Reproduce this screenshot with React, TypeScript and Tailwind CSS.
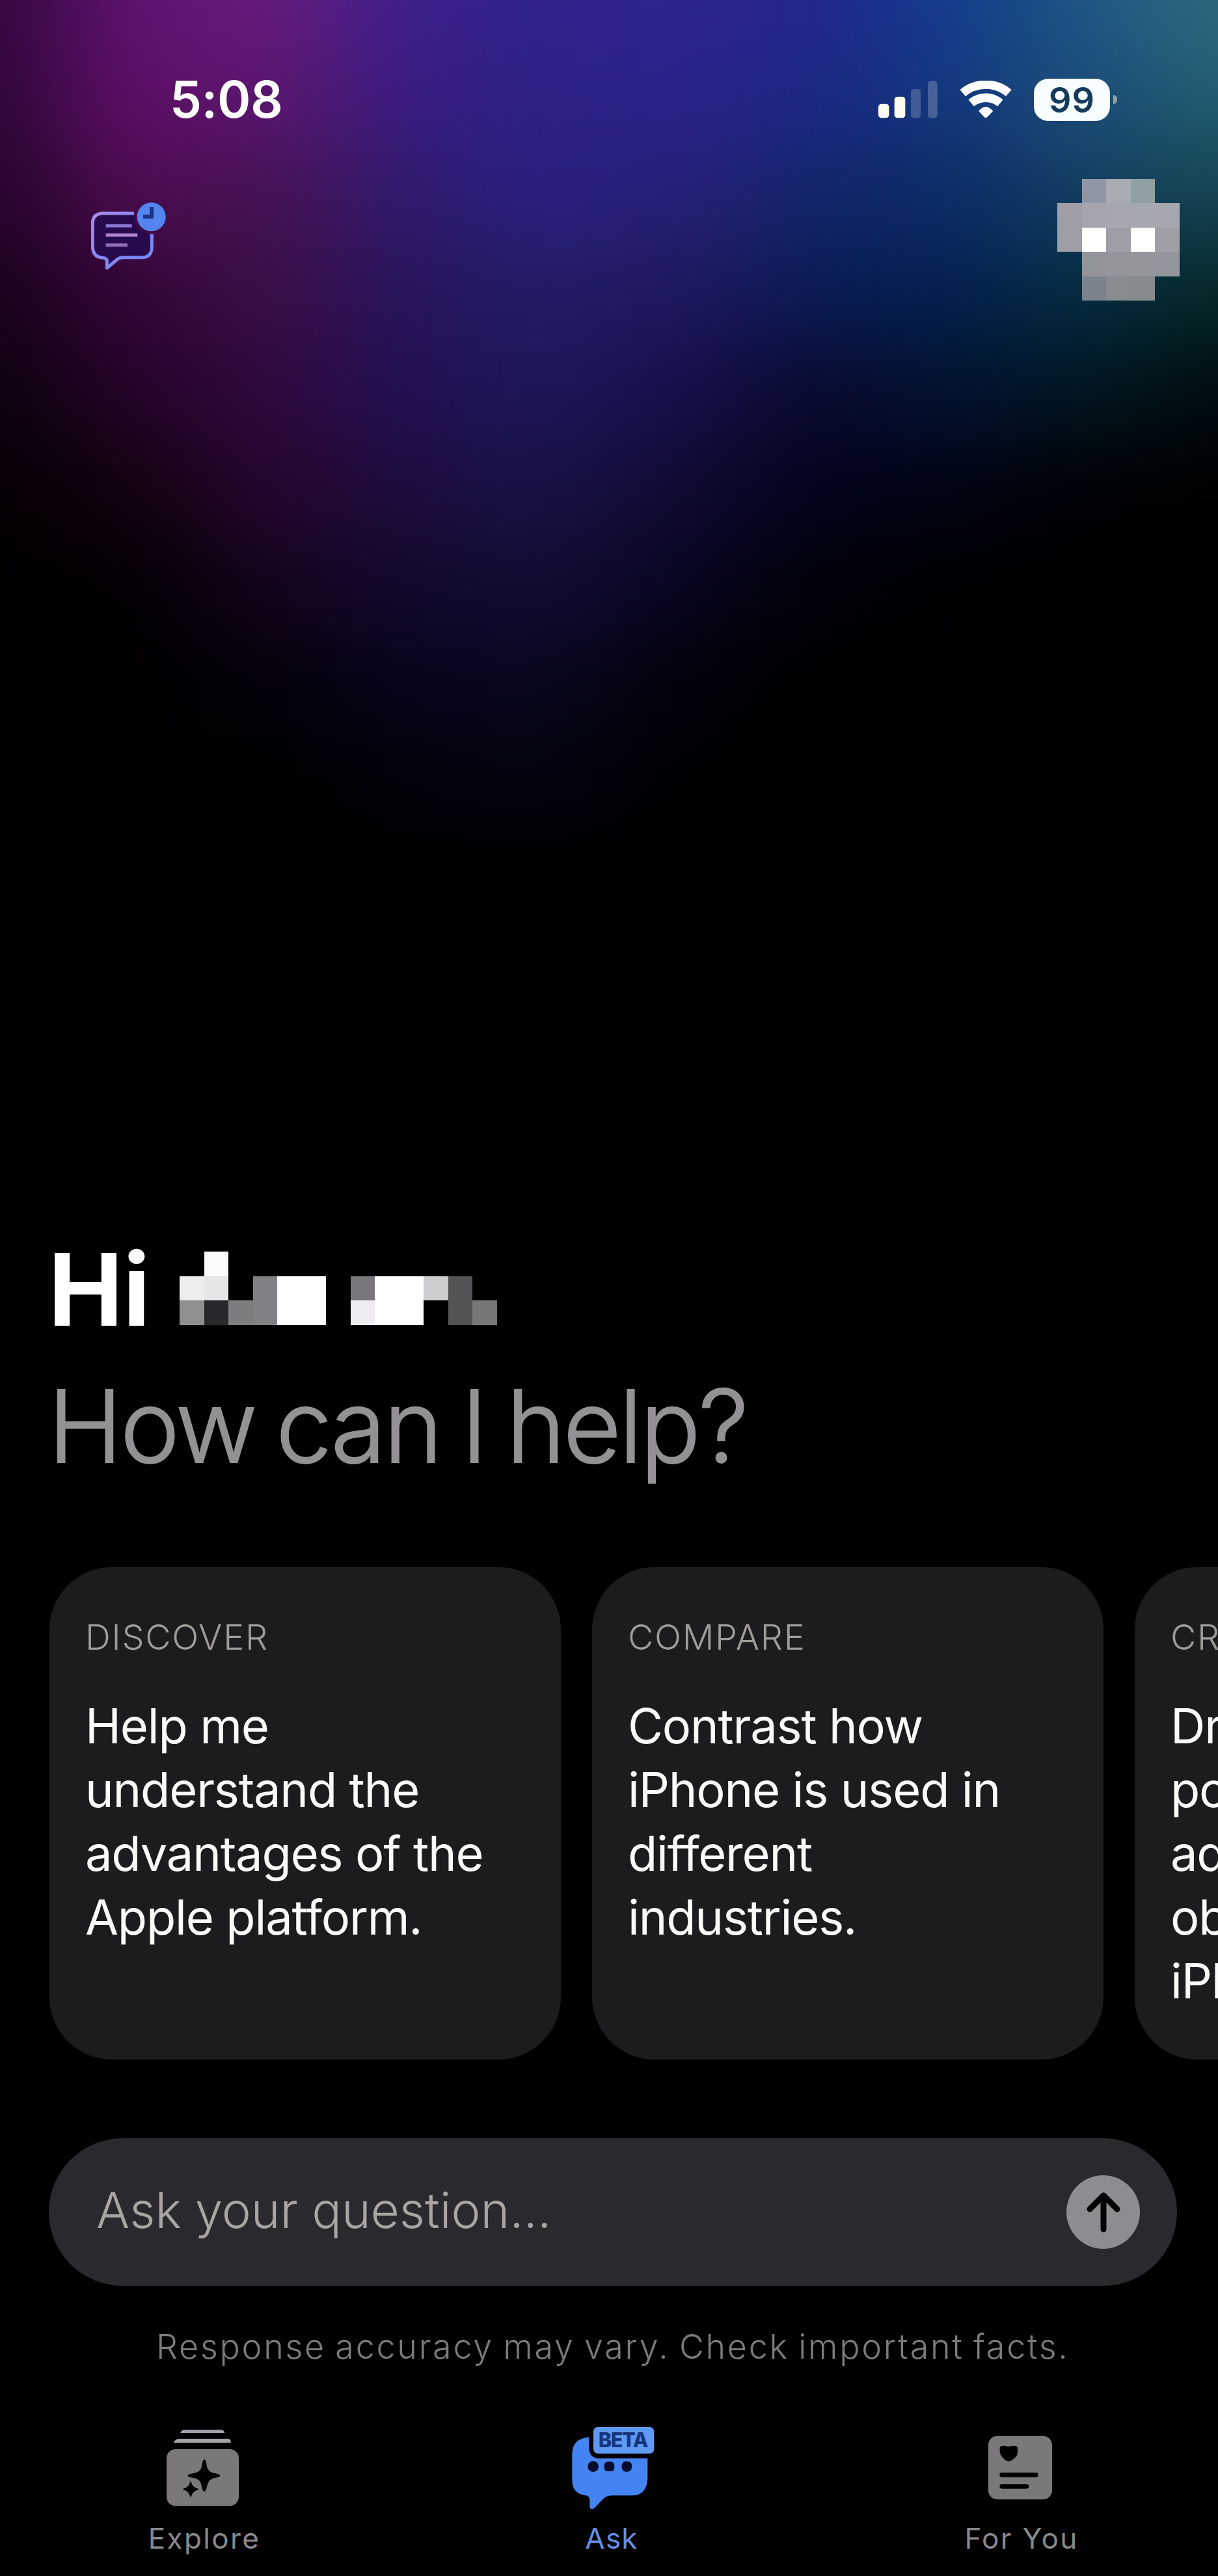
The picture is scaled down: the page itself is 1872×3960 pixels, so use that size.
import type { ReactNode } from "react";

const prompts = [
  {
    label: "DISCOVER",
    text: "Help me\nunderstand the\nadvantages of the\nApple platform.",
  },
  {
    label: "COMPARE",
    text: "Contrast how\niPhone is used in\ndifferent\nindustries.",
  },
  {
    label: "CREATE",
    text: "Draft a list of\npotential\nadoption\nobjections to\niPhone.",
  },
];

// Colour mesh behind the header, one row every 150px, one column every 208px
const mesh = [
  ["#36063f", "#5f1470", "#661a7c", "#3e208a", "#2f238a", "#2e2590", "#24268c", "#123c8c", "#205684", "#2c6a7e"],
  ["#30063a", "#5e0f66", "#5a176e", "#3a1c80", "#2b2284", "#2a2388", "#1c2882", "#12387e", "#1c4c78", "#235c70"],
  ["#26042c", "#4c0c50", "#461252", "#301a6e", "#28207e", "#262076", "#12246a", "#0a2c66", "#123e60", "#144450"],
  ["#18031a", "#340538", "#3a0f48", "#28145a", "#201c66", "#1e185e", "#0b1b52", "#03204e", "#042c42", "#052826"],
  ["#0e0210", "#240428", "#2e0a40", "#241052", "#1c1858", "#16104a", "#070a30", "#021230", "#011620", "#000c10"],
  ["#050004", "#140210", "#26062e", "#1e0c40", "#181346", "#0f0a34", "#03041c", "#010414", "#000206", "#000000"],
  ["#000000", "#030004", "#14041c", "#12082c", "#110c34", "#070620", "#01020a", "#000002", "#000000", "#000000"],
  ["#000000", "#000000", "#05010a", "#08041c", "#08081e", "#02020c", "#000000", "#000000", "#000000", "#000000"],
  ["#000000", "#000000", "#000000", "#02030a", "#030410", "#000002", "#000000", "#000000", "#000000", "#000000"],
  ["#000000", "#000000", "#000000", "#000000", "#000000", "#000000", "#000000", "#000000", "#000000", "#000000"],
];

const avatar = [
  "bg-transparent", "bg-[#8f97a5]", "bg-[#a7abb2]", "bg-[#909fa4]", "bg-transparent",
  "bg-[#9f9da8]", "bg-[#a5a4ac]", "bg-[#a6a7ae]", "bg-[#a6a8af]", "bg-[#a7a8af]",
  "bg-[#9f9da6]", "bg-white", "bg-[#9e9fa6]", "bg-white", "bg-[#a09fa6]",
  "bg-transparent", "bg-[#929499]", "bg-[#94959a]", "bg-[#95969b]", "bg-[#94959d]",
  "bg-transparent", "bg-[#7a828b]", "bg-[#878c91]", "bg-[#868b90]", "bg-transparent",
];

const nameMask = [
  "bg-black", "bg-[#fbfbfb]", "bg-black", "bg-black", "bg-black", "bg-black", "bg-black", "bg-black", "bg-black", "bg-black", "bg-black", "bg-black", "bg-black",
  "bg-[#ededf0]", "bg-[#e6e6e9]", "bg-black", "bg-[#828084]", "bg-white", "bg-white", "bg-black", "bg-[#79777b]", "bg-white", "bg-white", "bg-[#cdccce]", "bg-[#535255]", "bg-black",
  "bg-[#8f8e91]", "bg-[#28272c]", "bg-[#7d7c7f]", "bg-[#828084]", "bg-white", "bg-white", "bg-black", "bg-[#eeecf0]", "bg-white", "bg-white", "bg-black", "bg-[#535255]", "bg-[#777679]",
];

function Aurora() {
  return (
    <svg className="absolute left-0 top-0 h-[1560px] w-full" viewBox="0 0 1872 1560" aria-hidden="true">
      <defs>
        <filter
          id="soften"
          filterUnits="userSpaceOnUse"
          x="-400"
          y="-400"
          width="2672"
          height="2300"
          colorInterpolationFilters="sRGB"
        >
          <feGaussianBlur stdDeviation="84 56" />
        </filter>
      </defs>
      <g filter="url(#soften)">
        {mesh.map((row, r) =>
          row.map((fill, c) => {
            // Outer cells are stretched past the edge so the blur does not darken it
            const left = c === 0 ? -400 : c * 208 - 104;
            const right = c === row.length - 1 ? 2272 : c * 208 + 105;
            const top = r === 0 ? -400 : r * 150 - 75;
            return (
              <rect key={`${r}-${c}`} x={left} y={top} width={right - left} height={r * 150 + 76 - top} fill={fill} />
            );
          }),
        )}
      </g>
    </svg>
  );
}

function StatusBar() {
  return (
    <div className="flex h-[70px] items-center justify-between pl-[261px] pr-[155px]">
      <span className="text-[78px] font-semibold leading-[70px] tracking-[-0.5px]">5:08</span>
      <div className="flex items-center">
        <svg className="h-[58px] w-[91px]" viewBox="90 100 273 174">
          <rect x="90" y="207" width="49" height="65" rx="14" fill="#fcfdf0" />
          <rect x="164" y="174" width="50" height="98" rx="14" fill="#fcfdf0" />
          <rect x="240" y="138" width="45" height="134" rx="14" fill="#fff" fillOpacity=".2" />
          <rect x="318" y="101" width="44" height="171" rx="14" fill="#fff" fillOpacity=".22" />
        </svg>
        <svg className="ml-[34px] h-[58px] w-20" viewBox="465 100 240 174" fill="none">
          <path d="M479 157 A165 165 0 0 1 691 157" stroke="#fff" strokeWidth="40" />
          <path d="M518 203 A105 105 0 0 1 652 203" stroke="#fff" strokeWidth="40" />
          <path d="M555 240 Q585 205 616 240 L591 266 Q585 272 579 266 Z" fill="#fff" stroke="#fff" strokeWidth="4" strokeLinejoin="round" />
        </svg>
        <div className="ml-[34px] flex h-[65px] w-[117px] items-center justify-center rounded-[22px] bg-[#f8fdff] text-[54px] font-semibold tracking-[1px] text-[#153a5c]">
          99
        </div>
        <div className="ml-[5px] h-[14px] w-[6px] rounded-r-full bg-[#8ba3ac]" />
      </div>
    </div>
  );
}

function HistoryIcon() {
  return (
    <svg className="mt-[36px] h-[104px] w-[115px]" viewBox="120 93 345 312" fill="none">
      <defs>
        <linearGradient id="outline" x1="120" y1="140" x2="400" y2="400" gradientUnits="userSpaceOnUse">
          <stop offset="0" stopColor="#a98be6" />
          <stop offset="0.5" stopColor="#8487f2" />
          <stop offset="1" stopColor="#6f86f4" />
        </linearGradient>
      </defs>
      <path
        d="M318 144 H170 Q127 148 127 190 V300 Q130 345 170 348 Q197 350 193 370 V396 L240 357 Q250 347 270 347 H362 Q399 343 400 300 V240 Q330 240 318 144 Z"
        fill="#260a4c"
      />
      <path
        d="M318 144 H170 Q127 148 127 190 V300 Q130 345 170 348 Q197 350 193 370 V396 L240 357 Q250 347 270 347 H362 Q399 343 400 300 V240"
        stroke="url(#outline)"
        strokeWidth="15"
        strokeLinejoin="round"
      />
      <path d="M188 201 H308" stroke="#8d75d4" strokeWidth="15" />
      <path d="M188 244 H334" stroke="#b083cf" strokeWidth="15" />
      <path d="M188 290 H288" stroke="#9070bb" strokeWidth="15" />
      <circle cx="398" cy="160" r="66" fill="#5485ee" />
      <path d="M399 114 V159 H360" stroke="#1c3488" strokeWidth="18" />
    </svg>
  );
}

function ExploreIcon() {
  return (
    <svg className="size-[130px]" viewBox="147 90 390 390">
      <path d="M232 120 Q236 106 252 106 H418 Q433 106 436 120 Z" fill="#a3a5ac" />
      <path d="M200 166 Q208 147 228 147 H452 Q466 147 464 166 Z" fill="#a4a4a8" />
      <rect x="168" y="195" width="333" height="262" rx="42" fill="#7b787c" />
      <path d="M342 242 C352 242 350 268 358 286 C366 302 384 306 404 309 C418 312 418 322 404 325 C380 330 366 334 360 350 C352 368 352 390 342 390 C332 390 332 368 325 350 C320 334 302 330 278 325 C262 322 262 312 278 309 C300 306 318 302 326 286 C334 268 332 242 342 242 Z" />
      <path d="M279 345 Q284 372 314 380 Q286 387 279 414 Q273 387 245 380 Q273 373 279 345 Z" stroke="#000" strokeWidth="4" strokeLinejoin="round" />
    </svg>
  );
}

function AskIcon() {
  return (
    <svg className="size-[130px]" viewBox="111 90 390 390">
      <path
        d="M195 140 V185 Q197 238 245 238 H466 V330 Q462 408 395 409 H300 Q275 410 262 424 L222 466 Q200 482 199 455 V430 Q199 410 178 408 Q122 400 118 345 V215 Q120 145 195 140 Z"
        fill="#4484f2"
      />
      <rect x="216" y="93" width="280" height="122" rx="20" fill="#5e99f4" />
      <text
        x="352"
        y="186"
        textAnchor="middle"
        fontSize="92"
        fontWeight="800"
        letterSpacing="-4"
        fill="#17357c"
      >
        BETA
      </text>
      <circle cx="215" cy="275" r="25" fill="#060a2c" />
      <rect x="266" y="253" width="47" height="44" rx="16" fill="#060a2c" />
      <rect x="347" y="251" width="46" height="48" rx="20" fill="#060a2c" />
    </svg>
  );
}

function ForYouIcon() {
  return (
    <svg className="size-[130px]" viewBox="165 90 390 390">
      <rect x="207" y="134" width="294" height="293" rx="42" fill="#7b787c" />
      <path d="M262 184 Q268 177 288 180 Q300 186 314 180 Q334 177 340 184 Q346 208 338 225 Q318 251 301 251 Q282 250 264 222 Q256 200 262 184 Z" />
      <rect x="259" y="303" width="178" height="22" rx="10" />
      <rect x="259" y="357" width="135" height="20" rx="10" />
    </svg>
  );
}

function Tab({ icon, label, active }: { icon: ReactNode; label: string; active?: boolean }) {
  return (
    <button type="button" className="flex flex-1 flex-col items-center">
      {icon}
      <span
        className={
          active
            ? "mr-1 mt-4 text-[44px] leading-[52px] tracking-[1.2px] text-[#648fe6]"
            : "mt-4 text-[44px] leading-[52px] tracking-[2.4px] text-[#89888a]"
        }
      >
        {label}
      </span>
    </button>
  );
}

export default function App() {
  return (
    <main className="relative h-[3960px] w-[1872px] overflow-hidden bg-black font-['Inter','Liberation_Sans',sans-serif] text-white">
      <Aurora />
      <div className="relative flex flex-col">
        <header className="h-[1877px] pt-[118px]">
          <StatusBar />
          <div className="mt-[87px] flex items-start justify-between pl-[140px] pr-[59px]">
            <HistoryIcon />
            <div className="grid h-[187px] w-[188px] grid-cols-5 grid-rows-5 overflow-hidden">
              {avatar.map((color, i) => (
                <div key={i} className={color} />
              ))}
            </div>
          </div>
        </header>

        <section className="pl-[74px]">
          <div className="flex items-center">
            <h1 className="w-[202px] text-[154px] font-bold leading-[210px]">Hi</h1>
            <div className="mb-[3px] grid h-[113px] w-[488px] grid-cols-13 grid-rows-3">
              {nameMask.map((color, i) => (
                <div key={i} className={color} />
              ))}
            </div>
          </div>
          <p className="whitespace-nowrap text-[154px] font-light leading-[210px] tracking-[-3.3px] text-[#939194] [-webkit-text-stroke:2px_#939194] [word-spacing:-8px]">
            How can I help?
          </p>
        </section>

        <section className="mt-28 flex gap-12 overflow-hidden pl-[76px]">
          {prompts.map((prompt) => (
            <article
              key={prompt.label}
              className="h-[757px] w-[786px] shrink-0 rounded-[96px] bg-[#1c1c1f] pl-[55px] pt-[74px]"
            >
              <h2 className="text-[54px] font-light leading-[68px] tracking-[1.7px] text-[#a09c9a]">
                {prompt.label}
              </h2>
              <p className="mt-[53px] whitespace-pre text-[74px] leading-[98px] tracking-[-1.2px] text-[#fbfaf8]">
                {prompt.text}
              </p>
            </article>
          ))}
        </section>

        <div className="ml-[75px] mt-[121px] flex h-[227px] w-[1734px] items-center justify-between rounded-full bg-[#2a292d] pl-[73px] pr-[57px]">
          <span className="pb-[7px] text-[76px] font-light text-[#a9a5a3]">Ask your question...</span>
          <button type="button" className="flex size-[113px] items-center justify-center rounded-full bg-[#8e8c91]">
            <svg className="h-[62px] w-[54px]" viewBox="0 0 54 62" fill="none">
              <path
                d="M27 57 V6 M6 26 L27 5 L48 26"
                stroke="#000"
                strokeWidth="9"
                strokeLinecap="round"
                strokeLinejoin="round"
              />
            </svg>
          </button>
        </div>

        <p className="mt-16 whitespace-nowrap pl-[240px] text-[52px] font-light leading-[60px] tracking-[2.75px] text-[#7c7b7e] [word-spacing:-3px]">
          Response accuracy may vary. Check important facts.
        </p>

        <nav className="-mr-3 mt-[92px] flex">
          <Tab icon={<ExploreIcon />} label="Explore" />
          <Tab icon={<AskIcon />} label="Ask" active />
          <Tab icon={<ForYouIcon />} label="For You" />
        </nav>
      </div>
    </main>
  );
}
